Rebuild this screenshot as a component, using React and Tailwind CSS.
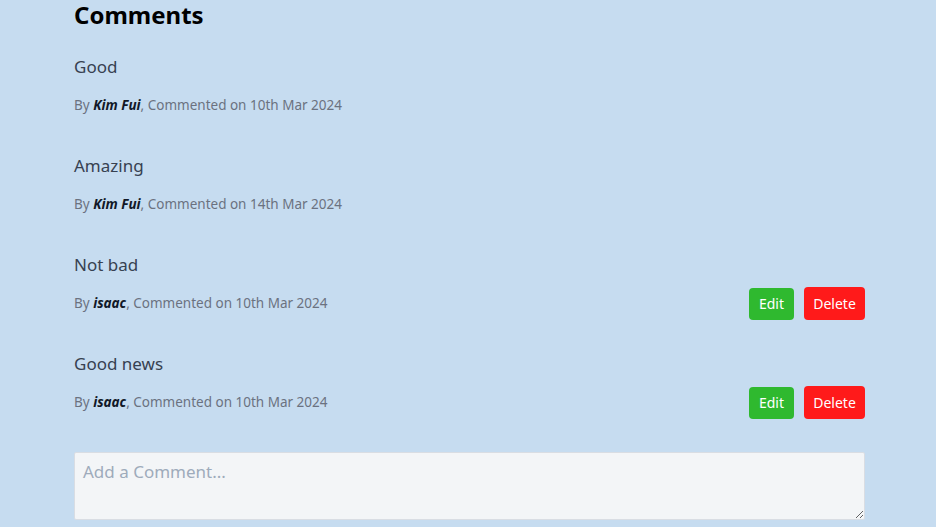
const comments = [
  { id: 1, text: "Good", author: "Kim Fui", date: "10th Mar 2024", mine: false },
  { id: 2, text: "Amazing", author: "Kim Fui", date: "14th Mar 2024", mine: false },
  { id: 3, text: "Not bad", author: "isaac", date: "10th Mar 2024", mine: true },
  { id: 4, text: "Good news", author: "isaac", date: "10th Mar 2024", mine: true },
];

const CommentItem = ({ comment }) => {
  return (
    <div className="flex flex-col gap-[7px]">
      <p className="text-[17px] leading-[28px] text-[#374151]">{comment.text}</p>
      <div className="flex h-[34px] items-center justify-between pt-[1px]">
        <p className="text-[13.5px] text-[#6b7280]">
          By <span className="font-bold italic text-[#111827]">{comment.author}</span>, Commented on{" "}
          {comment.date}
        </p>
        {comment.mine && (
          <div className="flex items-center gap-[10px]">
            <button className="h-[32px] w-[45px] rounded-[4px] bg-[#2fb92f] text-[14px] text-white">
              Edit
            </button>
            <button className="h-[33px] w-[61px] rounded-[4px] bg-[#ff1a1a] text-[14px] text-white">
              Delete
            </button>
          </div>
        )}
      </div>
    </div>
  );
};

const App = () => {
  return (
    <div
      className="min-h-screen bg-[#c6dcf0] pl-[74px] pr-[71px]"
      style={{ fontFamily: '"Noto Sans", "Open Sans", sans-serif' }}
    >
      <h1 className="text-[24px] font-bold leading-[29px] text-black">Comments</h1>
      <div className="mt-[24px] flex flex-col gap-[30px]">
        {comments.map((c) => (
          <CommentItem key={c.id} comment={c} />
        ))}
      </div>
      <textarea
        placeholder="Add a Comment..."
        className="mt-[33px] block h-[68px] w-full rounded-[2px] border border-[#d9dde3] bg-[#f3f5f7] px-[8px] py-[6px] text-[17px] text-[#374151] placeholder:text-[#9eabbb] outline-none"
      />
    </div>
  );
};

export default App;
